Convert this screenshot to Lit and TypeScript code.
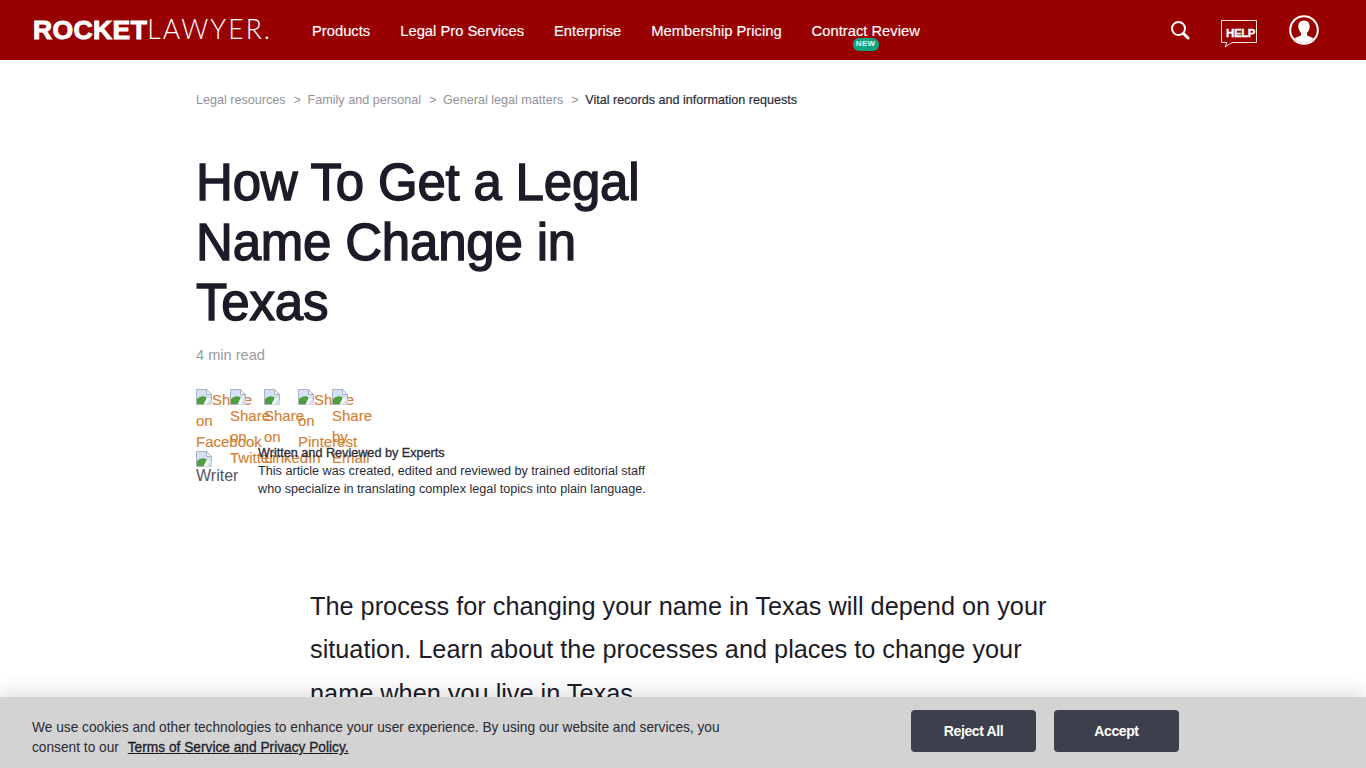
import { LitElement, html, css, svg } from "lit";
import { customElement } from "lit/decorators.js";

const brokenIcon = svg`<svg class="broken" width="16" height="16" viewBox="0 0 16 16">
  <path d="M.5 .5H10.500L15.500 5.500V15.500H.5Z" fill="#d6e2f4" stroke="#a8b2c0"/>
  <path d="M10.500 .5V5.500H15.500Z" fill="#f2f5f9" stroke="#a8b2c0"/>
  <path d="M1 15V10Q5 5.500 11 8.500L8 15Z" fill="#4f9e3f"/>
  <path d="M7.500 15.500L11 8.500L15.500 11V15.500Z" fill="#fff"/>
  <path d="M11 15L13 11L15 9.500V15Z" fill="#d5dde8"/>
</svg>`;

@customElement("app-root")
export class AppRoot extends LitElement {
  static styles = css`
    :host { display: block; position: relative; height: 768px; overflow: hidden; font-family: "Liberation Sans", Arial, sans-serif; color: #1c1c28; background: #fff; }
    .nav { height: 60px; background: #990000; display: flex; align-items: center; padding-left: 33px; color: #fff; }
    .logo { width: 237px; display: flex; align-items: baseline; line-height: 1; color: #fff; white-space: nowrap; margin-right: 42px; }
    .rocket { font-size: 26.5px; font-weight: 700; letter-spacing: .4px; -webkit-text-stroke: 1px #fff; }
    .lawyer { font-family: "Lato", sans-serif; font-size: 26.5px; font-weight: 300; letter-spacing: 2.1px; }
    .links { display: flex; gap: 30px; font-size: 14.75px; margin-top: 2px; -webkit-text-stroke: .15px #fff; }
    .link { position: relative; white-space: nowrap; }
    .new { position: absolute; left: 41px; top: 15px; width: 26px; height: 12.500px; border-radius: 6px; background: #10a37f; color: #dff; font-size: 8px; font-weight: 700; line-height: 12.500px; text-align: center; letter-spacing: .3px; -webkit-text-stroke: 0; }
    .icons { margin-left: auto; display: flex; align-items: center; padding-right: 47px; }
    .icons svg { display: block; }
    .ic-help { margin-left: 31px; margin-top: 8px; }
    .ic-user { margin-left: 32px; }
    .help-box { position: relative; width: 36px; height: 28px; }
    .help-box span { position: absolute; left: 5px; top: 6px; font-size: 11.500px; font-weight: 700; color: #fff; letter-spacing: -.4px; line-height: 14px; -webkit-text-stroke: .3px #fff; }
    .main { padding: 32px 0 0 196px; }
    .crumbs { display: flex; font-size: 12.6px; line-height: 16px; color: #92929c; white-space: nowrap; }
    .crumbs .sep { margin: 0 6.600px 0 8px; }
    .crumbs .cur { color: #2c2c38; -webkit-text-stroke: .2px #2c2c38; }
    h1 { margin: 45px 0 0; width: 470px; font-size: 51px; line-height: 60px; font-weight: 400; -webkit-text-stroke: 1.4px #1c1c28; color: #1c1c28; letter-spacing: -.2px; }
    .read { margin-top: 12px; font-size: 14.6px; line-height: 20px; color: #9a9aa2; }
    .share { margin-top: 24px; display: flex; height: 62px; }
    .s { width: 34px; color: #d17f33; font-size: 15px; line-height: 21px; white-space: nowrap; -webkit-text-stroke: .15px #d17f33; }
    .s div { height: 21px; display: flex; align-items: flex-start; }
    .s .top { height: 16px; }
    .s .first { height: 21px; }
    .broken { flex: none; display: block; }
    .writer { display: flex; height: 46px; }
    .w-alt { width: 42px; margin-right: 20px; overflow: hidden; font-size: 16px; line-height: 18px; color: #55555f; }
    .w-text { font-size: 12.65px; line-height: 18px; color: #2b2b36; white-space: nowrap; margin-top: -7px; }
    .w-text b { font-weight: 400; -webkit-text-stroke: .3px #2b2b36; display: block; }
    .intro { margin: 88px 0 0 114px; width: 760px; font-size: 25.3px; line-height: 43.3px; color: #1c1c28; }
    .cookie { position: absolute; left: 0; right: 0; bottom: 0; height: 71px; background: #d3d3d3; box-shadow: 0 -6px 18px rgba(0,0,0,.12); display: flex; align-items: flex-start; padding-left: 32px; }
    .c-text { width: 879px; padding-top: 21px; font-size: 13.72px; line-height: 20px; color: #2a2a34; }
    .c-text a { margin-left: 5px; color: #1c1c28; text-decoration: underline; -webkit-text-stroke: .3px #1c1c28; }
    .btn { width: 125px; height: 42px; margin-top: 13px; border: 0; border-radius: 4px; background: #3e3f4c; color: #fff; font: 700 14px "Liberation Sans", sans-serif; margin-right: 18px; letter-spacing: -.4px; padding: 0; }
  `;

  private share(lines: string[], inline: boolean) {
    return html`<div class="s">
      ${inline
        ? html`<div class="first">${brokenIcon}<span>${lines[0]}</span></div>${lines.slice(1).map((l) => html`<div>${l}</div>`)}`
        : html`<div class="top">${brokenIcon}</div>${lines.map((l) => html`<div>${l}</div>`)}`}
    </div>`;
  }

  render() {
    return html`
      <header class="nav">
        <div class="logo"><span class="rocket">ROCKET</span><span class="lawyer">LAWYER.</span></div>
        <nav class="links">
          <span class="link">Products</span>
          <span class="link">Legal Pro Services</span>
          <span class="link">Enterprise</span>
          <span class="link">Membership Pricing</span>
          <span class="link">Contract Review<span class="new">NEW</span></span>
        </nav>
        <div class="icons">
          <svg width="20" height="20" viewBox="0 0 20 20" fill="none" stroke="#fff"><circle cx="8.500" cy="8.500" r="6.500" stroke-width="2"/><path d="M13.500 13.500L18 18" stroke-width="3" stroke-linecap="round"/></svg>
          <div class="help-box ic-help">
            <svg width="36" height="28" viewBox="0 0 36 28" fill="none"><path d="M.5 .5H35.500V22.500H11L4 27L6 22.500H.5Z" stroke="#fbe6e6"/></svg>
            <span>HELP</span>
          </div>
          <svg class="ic-user" width="30" height="30" viewBox="0 0 30 30"><circle cx="15" cy="15" r="13.800" fill="none" stroke="#fff" stroke-width="2"/><path d="M15 5.500c3.900 0 5.900 2.800 5.700 6.500-.1 2.500-1.300 4.500-2.700 5.900v2.300c1.200 1.200 4.700 1.700 6.500 3.400A13 13 0 0 1 15 28a13 13 0 0 1-9.500-4.400c1.800-1.700 5.300-2.200 6.500-3.400v-2.300c-1.400-1.400-2.600-3.400-2.700-5.900C9.100 8.300 11.100 5.500 15 5.500z" fill="#fff"/></svg>
        </div>
      </header>
      <main class="main">
        <div class="crumbs">
          <span>Legal resources</span><span class="sep">&gt;</span>
          <span>Family and personal</span><span class="sep">&gt;</span>
          <span>General legal matters</span><span class="sep">&gt;</span>
          <span class="cur">Vital records and information requests</span>
        </div>
        <h1>How To Get a Legal Name Change in Texas</h1>
        <div class="read">4 min read</div>
        <div class="share">
          ${this.share(["Share", "on", "Facebook"], true)}
          ${this.share(["Share", "on", "Twitter"], false)}
          ${this.share(["Share", "on", "LinkedIn"], false)}
          ${this.share(["Share", "on", "Pinterest"], true)}
          ${this.share(["Share", "by", "Email"], false)}
        </div>
        <div class="writer">
          <div class="w-alt">${brokenIcon}Writer</div>
          <div class="w-text"><b>Written and Reviewed by Experts</b>This article was created, edited and reviewed by trained editorial staff<br>who specialize in translating complex legal topics into plain language.</div>
        </div>
        <p class="intro">The process for changing your name in Texas will depend on your situation. Learn about the processes and places to change your name when you live in Texas.</p>
      </main>
      <div class="cookie">
        <div class="c-text">We use cookies and other technologies to enhance your user experience. By using our website and services, you<br>consent to our <a>Terms of Service and Privacy Policy.</a></div>
        <button class="btn">Reject All</button>
        <button class="btn">Accept</button>
      </div>
    `;
  }
}
